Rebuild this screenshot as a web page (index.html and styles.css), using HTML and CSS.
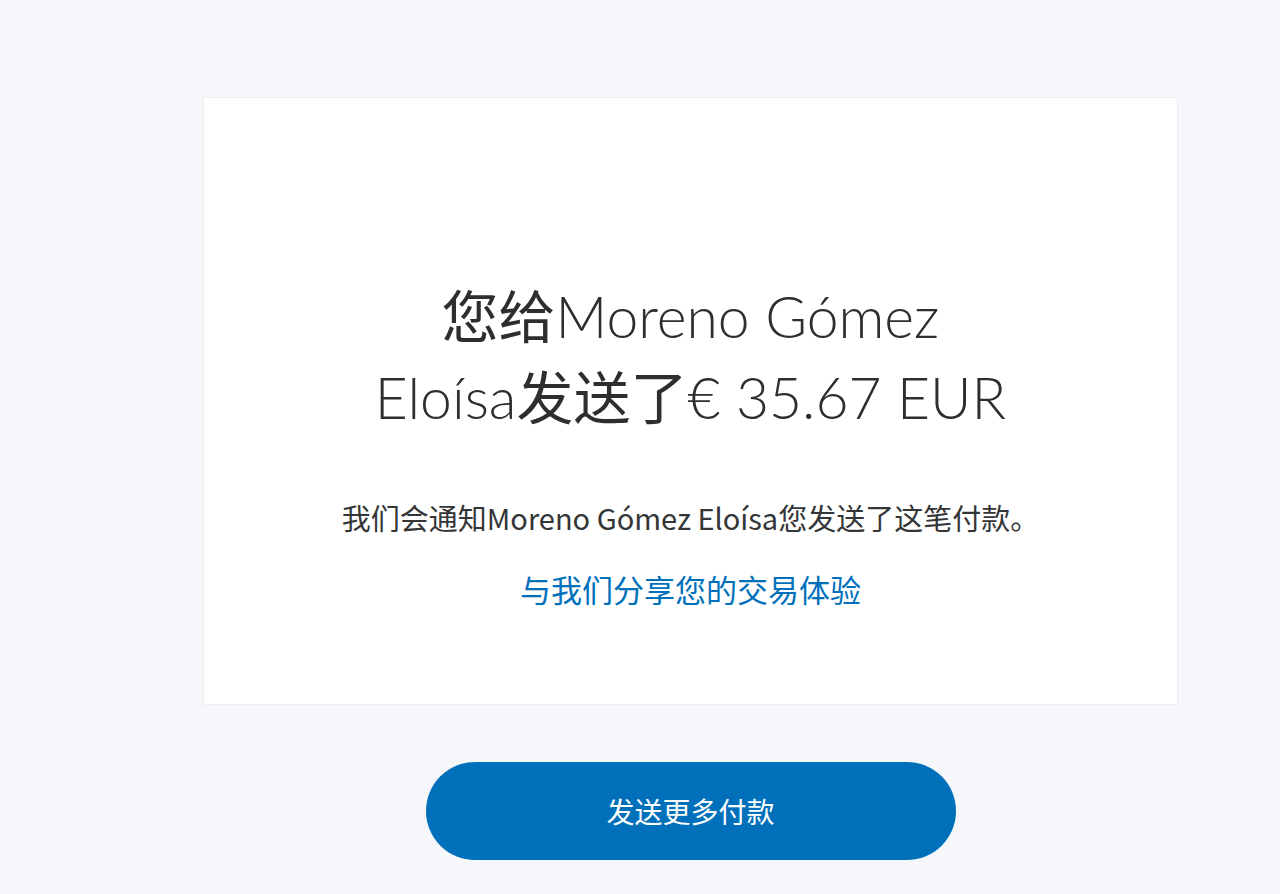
FILE: index.html
```html
<!DOCTYPE html>
<html lang="zh-CN">
<head>
<meta charset="utf-8">
<title>付款已发送</title>
<link rel="stylesheet" href="styles.css">
</head>
<body>
<main class="page">
  <section class="card">
    <h1 class="title"><span class="cjk">您给</span>Moreno Gómez Eloísa<span class="cjk">发送了</span>€ 35.67 EUR</h1>
    <p class="note">我们会通知Moreno Gómez Eloísa您发送了这笔付款。</p>
    <a class="share" href="#">与我们分享您的交易体验</a>
  </section>
  <div class="actions">
    <button class="btn" type="button">发送更多付款</button>
  </div>
</main>
</body>
</html>
```

FILE: styles.css
```css
html, body {
  margin: 0;
  padding: 0;
  background: #f5f7fa;
}
body {
  font-family: "Noto Sans CJK SC", "Noto Sans", sans-serif;
  color: #2c2e2f;
}
.page {
  padding: 97px 0 0 203px;
  width: 975px;
}
.card {
  box-sizing: border-box;
  width: 975px;
  height: 608px;
  background: #ffffff;
  border: 1px solid #eceef0;
  display: flex;
  flex-direction: column;
  align-items: center;
  padding-top: 176px;
}
.title {
  margin: 0;
  max-width: 636px;
  text-align: center;
  font-family: "Lato", "Noto Sans CJK SC", sans-serif;
  font-weight: 300;
  font-size: 57px;
  line-height: 78px;
  color: #2c2e2f;
}
.cjk {
  font-family: "Noto Sans CJK SC", sans-serif;
  font-weight: 400;
  line-height: 78px;
}
.note {
  margin: 61px 0 0;
  font-size: 29px;
  line-height: 40px;
  color: #333536;
  text-align: center;
}
.share {
  margin-top: 32px;
  font-size: 31px;
  line-height: 40px;
  color: #0070ba;
  text-decoration: none;
}
.actions {
  display: flex;
  justify-content: center;
  margin-top: 57px;
}
.btn {
  width: 530px;
  height: 98px;
  border: 0;
  border-radius: 49px;
  background: #0070ba;
  color: #ffffff;
  font-family: "Noto Sans CJK SC", sans-serif;
  font-size: 28px;
  cursor: pointer;
}
```
